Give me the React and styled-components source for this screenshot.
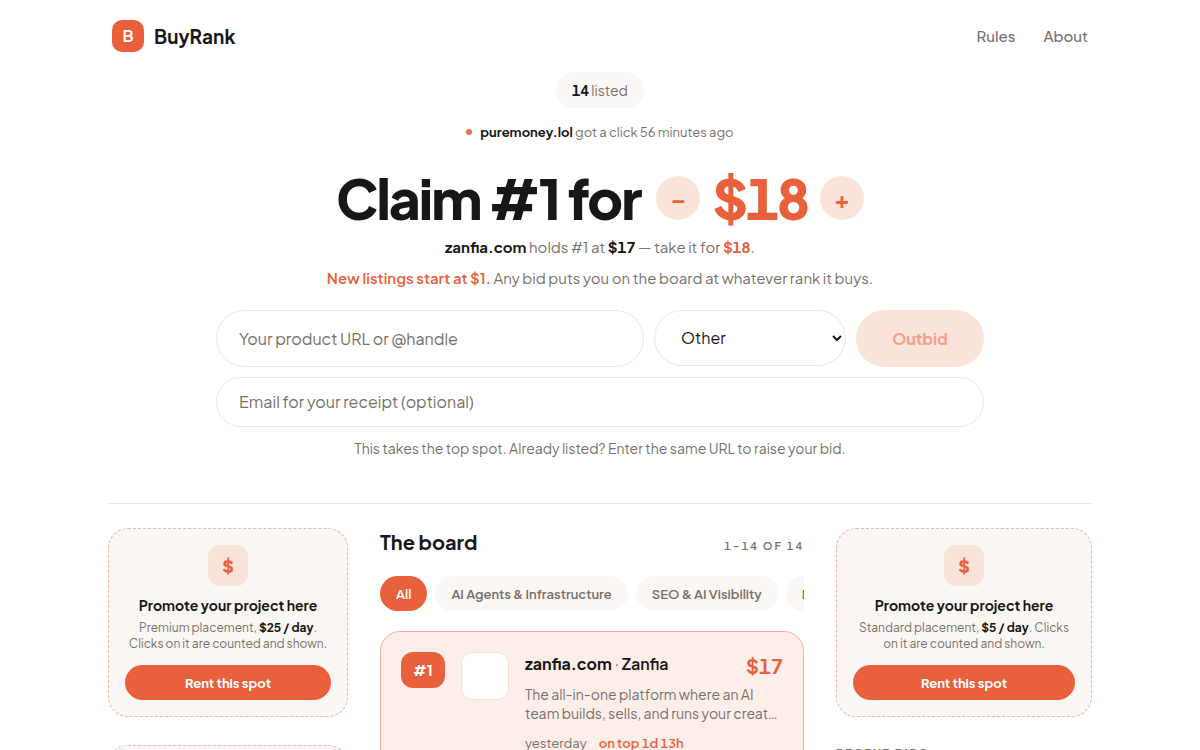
import React, { useState } from 'react';
import styled, { createGlobalStyle } from 'styled-components';

const GlobalStyle = createGlobalStyle`
* {
    box-sizing: border-box;
}
html {
    scrollbar-width: none;
}
body {
    margin: 0;
    background: #ffffff;
    color: #181715;
    font-family: "Plus Jakarta Sans", Inter, sans-serif;
    font-size: 15px;
    line-height: 24px;
}
h1, h2, h3, p {
    margin: 0;
}
button, input, select {
    font-family: inherit;
}
`

const Page = styled.div`
max-width: 1032px;
margin: 0 auto;
padding: 0 24px;
`

const Header = styled.header`
display: flex;
align-items: center;
justify-content: space-between;
padding: 20px 4px;
`
const Brand = styled.a`
display: flex;
align-items: center;
gap: 10px;
color: #181715;
font-size: 19px;
font-weight: 700;
text-decoration: none;
`
const BrandMark = styled.span`
display: flex;
align-items: center;
justify-content: center;
width: 32px;
height: 32px;
border-radius: 10px;
background: #e8613c;
color: #ffffff;
font-size: 16px;
font-weight: 600;
`
const Nav = styled.nav`
display: flex;
gap: 28px;
`
const NavLink = styled.a`
color: #78716c;
font-size: 15px;
font-weight: 500;
text-decoration: none;
`

const Hero = styled.section`
display: flex;
flex-direction: column;
align-items: center;
padding-bottom: 43px;
border-bottom: 1px solid #e9e7e5;
text-align: center;
`
const Listed = styled.div`
padding: 6px 16px;
border-radius: 18px;
background: #fbf7f4;
color: #78716c;
font-size: 14px;
`
const Strong = styled.strong`
color: ${({ $accent }) => ($accent ? '#e8613c' : '#181715')};
font-weight: ${({ $medium }) => ($medium ? 600 : 700)};
font-variant-numeric: ${({ $tabular }) => ($tabular ? 'tabular-nums' : 'normal')};
`
const Activity = styled.p`
display: flex;
align-items: center;
gap: 8px;
margin-top: 12px;
color: #78716c;
font-size: 13px;
`
const Dot = styled.span`
width: 6px;
height: 6px;
border-radius: 50%;
background: #e8714f;
`
const Title = styled.h1`
display: flex;
align-items: center;
gap: 12px;
margin-top: 22px;
font-size: 55px;
line-height: 64px;
font-weight: 800;
letter-spacing: -2px;
`
const TitleText = styled.span`
margin-right: 4px;
`
const Price = styled.span`
color: #e8613c;
font-variant-numeric: tabular-nums;
`
const Stepper = styled.button`
width: 44px;
height: 44px;
padding: 0;
border: 0;
border-radius: 50%;
background: #fae3d9;
color: #e8613c;
font-size: 24px;
font-weight: 700;
cursor: pointer;
`
const Lead = styled.p`
margin-top: ${({ $gap }) => $gap}px;
color: #78716c;
font-size: 15px;
`

const Form = styled.form`
display: grid;
grid-template-columns: 1fr 192px 128px;
gap: 10px;
width: 100%;
max-width: 768px;
margin-top: 20px;
`
const Field = styled.input`
min-width: 0;
height: ${({ $wide }) => ($wide ? 50 : 57)}px;
grid-column: ${({ $wide }) => ($wide ? '1 / -1' : 'auto')};
padding: 0 22px 1px;
border: 1px solid #e9e7e5;
border-radius: 29px;
background: #ffffff;
color: #181715;
font-size: 16px;
&::placeholder {
    color: #78716c;
    opacity: 1;
}
`
const Category = styled.select`
height: 56px;
padding: 0 0 1px 22px;
border: 1px solid #e9e7e5;
border-radius: 28px;
background: #ffffff;
color: #181715;
font-size: 16px;
`
const Submit = styled.button`
height: 57px;
border: 0;
border-radius: 29px;
background: #fae3d9;
color: #f0a089;
font-size: 16px;
font-weight: 700;
`
const Note = styled.p`
margin-top: 9px;
color: #78716c;
font-size: 14px;
`

const Columns = styled.main`
display: grid;
grid-template-columns: 240px minmax(0, 1fr) 256px;
gap: 32px;
padding: 24px 0;
`
const Side = styled.aside`
display: flex;
flex-direction: column;
gap: 28px;
`
const Promo = styled.section`
display: flex;
flex-direction: column;
align-items: center;
padding: 16px;
border: 1px dashed #f1b3a3;
border-radius: 20px;
background: #fbf7f4;
text-align: center;
`
const PromoIcon = styled.span`
display: flex;
align-items: center;
justify-content: center;
width: 40px;
height: 41px;
border-radius: 12px;
background: #fae3d9;
color: #e8613c;
font-size: 18px;
font-weight: 800;
`
const PromoTitle = styled.h3`
margin-top: 9px;
font-size: 14px;
line-height: 20px;
font-weight: 700;
`
const PromoText = styled.p`
margin: 5px 0 13px;
color: #78716c;
font-size: 12px;
line-height: 16px;
`
const RentButton = styled.button`
width: 100%;
height: 35px;
border: 0;
border-radius: 18px;
background: #e8613c;
color: #ffffff;
font-size: 13px;
font-weight: 700;
cursor: pointer;
`
const SideTitle = styled.h2`
color: #78716c;
font-size: 11px;
line-height: 16px;
font-weight: 700;
letter-spacing: 2px;
text-transform: uppercase;
`

const BoardHead = styled.div`
display: flex;
align-items: center;
justify-content: space-between;
`
const BoardTitle = styled.h2`
font-size: 20px;
line-height: 28px;
font-weight: 700;
`
const Range = styled.span`
padding-top: 8px;
color: #78716c;
font-size: 11px;
line-height: 18px;
font-weight: 600;
font-variant-numeric: tabular-nums;
letter-spacing: 2px;
`
const Filters = styled.div`
display: flex;
gap: 8px;
margin-top: 20px;
overflow: hidden;
`
const Filter = styled.button`
flex: none;
height: 35px;
padding: 0 16px;
border: 0;
border-radius: 18px;
background: ${({ $active }) => ($active ? '#e8613c' : '#fbf7f4')};
color: ${({ $active }) => ($active ? '#ffffff' : '#78716c')};
font-size: 13px;
font-weight: 600;
cursor: pointer;
`
const Listing = styled.article`
display: flex;
align-items: flex-start;
gap: 16px;
margin-top: 20px;
padding: 20px;
border: 1px solid #eeb3a0;
border-radius: 20px;
background: #fdeeea;
`
const Rank = styled.span`
flex: none;
width: 44px;
border-radius: 12px;
background: #e8613c;
color: #ffffff;
font-size: 15px;
line-height: 36px;
font-weight: 700;
text-align: center;
`
const Thumb = styled.span`
flex: none;
width: 48px;
height: 48px;
border: 1px solid #f5e0d8;
border-radius: 12px;
background: #ffffff;
`
const ListingBody = styled.div`
flex: 1;
min-width: 0;
`
const ListingHead = styled.div`
display: flex;
align-items: flex-start;
justify-content: space-between;
`
const ListingName = styled.h3`
color: #78716c;
font-size: 16px;
line-height: 24px;
font-weight: 400;
`
const ListingPrice = styled.span`
color: #e8613c;
font-size: 20px;
line-height: 28px;
font-weight: 700;
font-variant-numeric: tabular-nums;
`
const ListingText = styled.p`
display: -webkit-box;
overflow: hidden;
margin-top: 5px;
color: #78716c;
font-size: 14px;
line-height: 19px;
-webkit-box-orient: vertical;
-webkit-line-clamp: 2;
`
const ListingMeta = styled.div`
display: flex;
gap: 12px;
margin-top: 8px;
color: #78716c;
font-size: 13px;
`

const categories = ['All', 'AI Agents & Infrastructure', 'SEO & AI Visibility', 'Launch Platforms']

const PromoCard = ({ placement, price }) => (
    <Promo>
        <PromoIcon>$</PromoIcon>
        <PromoTitle>Promote your project here</PromoTitle>
        <PromoText>
            {placement} placement, <Strong>${price} / day</Strong>. Clicks on it are counted and shown.
        </PromoText>
        <RentButton type='button'>Rent this spot</RentButton>
    </Promo>
)

const App = () => {
    const [bid, setBid] = useState(18)
    const [active, setActive] = useState('All')

    return (
        <Page>
            <GlobalStyle />
            <Header>
                <Brand href='#'>
                    <BrandMark>B</BrandMark>
                    BuyRank
                </Brand>
                <Nav>
                    <NavLink href='#rules'>Rules</NavLink>
                    <NavLink href='#about'>About</NavLink>
                </Nav>
            </Header>
            <Hero>
                <Listed><Strong $tabular>14</Strong> listed</Listed>
                <Activity>
                    <Dot />
                    <span><Strong>puremoney.lol</Strong> got a click 56 minutes ago</span>
                </Activity>
                <Title>
                    <TitleText>Claim #1 for</TitleText>
                    <Stepper type='button' aria-label='Lower bid' onClick={() => setBid(Math.max(1, bid - 1))}>–</Stepper>
                    <Price>${bid}</Price>
                    <Stepper type='button' aria-label='Raise bid' onClick={() => setBid(bid + 1)}>+</Stepper>
                </Title>
                <Lead $gap={5}>
                    <Strong>zanfia.com</Strong> holds #1 at <Strong $tabular>$17</Strong> — take it for <Strong $accent $tabular>${bid}</Strong>.
                </Lead>
                <Lead $gap={7}>
                    <Strong $accent $medium>New listings start at $1.</Strong> Any bid puts you on the board at whatever rank it buys.
                </Lead>
                <Form onSubmit={(e) => e.preventDefault()}>
                    <Field aria-label='Product URL or handle' placeholder='Your product URL or @handle' />
                    <Category aria-label='Category' defaultValue='Other'>
                        <option>Other</option>
                        {categories.slice(1).map(item => <option key={item}>{item}</option>)}
                    </Category>
                    <Submit disabled>Outbid</Submit>
                    <Field $wide type='email' aria-label='Email' placeholder='Email for your receipt (optional)' />
                </Form>
                <Note>This takes the top spot. Already listed? Enter the same URL to raise your bid.</Note>
            </Hero>
            <Columns>
                <Side>
                    <PromoCard placement='Premium' price={25} />
                    <PromoCard placement='Premium' price={25} />
                </Side>
                <section>
                    <BoardHead>
                        <BoardTitle>The board</BoardTitle>
                        <Range>1–14 OF 14</Range>
                    </BoardHead>
                    <Filters>
                        {categories.map(item => (
                            <Filter
                                key={item}
                                type='button'
                                $active={active === item}
                                onClick={() => setActive(item)}
                            >
                                {item}
                            </Filter>
                        ))}
                    </Filters>
                    <Listing>
                        <Rank>#1</Rank>
                        <Thumb />
                        <ListingBody>
                            <ListingHead>
                                <ListingName>
                                    <Strong>zanfia.com</Strong> · <Strong $medium>Zanfia</Strong>
                                </ListingName>
                                <ListingPrice>$17</ListingPrice>
                            </ListingHead>
                            <ListingText>
                                The all-in-one platform where an AI team builds, sells, and runs your creator business
                            </ListingText>
                            <ListingMeta>
                                <span>yesterday</span>
                                <Strong $accent $medium $tabular>on top 1d 13h</Strong>
                            </ListingMeta>
                        </ListingBody>
                    </Listing>
                </section>
                <Side>
                    <PromoCard placement='Standard' price={5} />
                    <SideTitle>Recent bids</SideTitle>
                </Side>
            </Columns>
        </Page>
    )
}

export default App
